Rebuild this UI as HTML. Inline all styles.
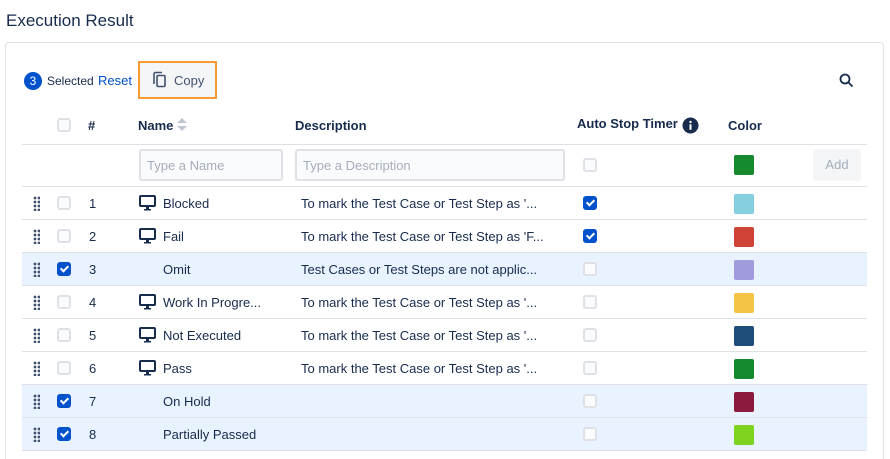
<!DOCTYPE html>
<html style="height:459px;overflow:hidden"><head><style>
*{box-sizing:border-box;margin:0;padding:0}
body{width:890px;height:459px;background:#fff;font-family:"Liberation Sans",sans-serif;color:#172b4d;position:relative;overflow:hidden;font-size:13px}
.a{position:absolute}
.panel{left:5px;top:42px;width:879px;height:417px;border:1px solid #dfe1e6;border-bottom:none;border-radius:4px 4px 0 0}
.cb{position:absolute;width:14px;height:14px;border:2px solid #dfe1e6;border-radius:3px;background:#fafbfc}
.cb.on{background:#0052cc;border-color:#0052cc}
.cb.on::after{content:"";position:absolute;left:3px;top:0px;width:3px;height:6px;border:solid #fff;border-width:0 2px 2px 0;transform:rotate(45deg)}
.row{position:absolute;left:22px;width:845px;height:33px;border-bottom:1px solid #dfe1e6}
.row.sel{background:#e9f2ff}
.row span{position:absolute;top:9px;font-size:13px}
.dots{position:absolute;left:11px;top:9px;width:7px;height:15px;background-image:radial-gradient(circle,#42526e 1.3px,transparent 1.5px);background-size:4px 4px}
.sw{position:absolute;left:712px;top:7px;width:20px;height:20px;border-radius:2px}
.mon{position:absolute;left:117px;top:8px}
</style></head><body>
<div class="a" style="left:6px;top:11px;font-size:17px;color:#172b4d">Execution Result</div>
<div class="a panel"></div>
<div class="a" style="left:24px;top:72px;width:18px;height:18px;border-radius:50%;background:#0052cc;color:#fff;font-size:12px;text-align:center;line-height:18px">3</div>
<div class="a" style="left:47px;top:74px;font-size:12px">Selected</div>
<div class="a" style="left:98px;top:73px;font-size:13px;color:#0052cc">Reset</div>
<div class="a" style="left:138px;top:61px;width:79px;height:38px;border:2px solid #f79a32;background:#f4f5f7"></div>
<svg class="a" style="left:151px;top:71px" width="16" height="18" viewBox="0 0 16 18"><path d="M3 13V3a1.5 1.5 0 0 1 1.5-1.5H11" fill="none" stroke="#42526e" stroke-width="1.6"/><rect x="6" y="4.5" width="8" height="11" rx="1.2" fill="none" stroke="#42526e" stroke-width="1.6"/></svg>
<div class="a" style="left:174px;top:73px;font-size:13px;color:#42526e">Copy</div>
<svg class="a" style="left:839px;top:73px" width="15" height="15" viewBox="0 0 15 15"><circle cx="6" cy="6" r="4.5" fill="none" stroke="#172b4d" stroke-width="1.8"/><path d="M9.5 9.5L13.5 13.5" stroke="#172b4d" stroke-width="1.8"/></svg>
<div class="cb" style="left:57px;top:118px"></div>
<div class="a" style="left:88px;top:118px;font-weight:bold;font-size:13px">#</div>
<div class="a" style="left:138px;top:118px;font-weight:bold;font-size:13px">Name</div>
<svg class="a" style="left:176px;top:117px" width="12" height="15"><path d="M1 6L6 1L11 6Z M1 9L6 14L11 9Z" fill="#c1c7d0"/></svg>
<div class="a" style="left:295px;top:118px;font-weight:bold;font-size:13px">Description</div>
<div class="a" style="left:577px;top:116px;font-weight:bold;font-size:13px">Auto Stop Timer</div>
<svg class="a" style="left:682px;top:117px" width="17" height="17"><circle cx="8.5" cy="8.5" r="8" fill="#172b4d"/><rect x="7.5" y="7.3" width="2" height="5.5" fill="#fff"/><circle cx="8.5" cy="5" r="1.2" fill="#fff"/></svg>
<div class="a" style="left:728px;top:118px;font-weight:bold;font-size:13px">Color</div>
<div class="a" style="left:22px;top:144px;width:845px;height:1px;background:#dfe1e6"></div>
<div class="a" style="left:139px;top:149px;width:144px;height:32px;border:2px solid #dfe1e6;border-radius:3px;background:#fafbfc;color:#a5adba;padding:7px 6px;font-size:13px">Type a Name</div>
<div class="a" style="left:295px;top:149px;width:270px;height:32px;border:2px solid #dfe1e6;border-radius:3px;background:#fafbfc;color:#a5adba;padding:7px 6px;font-size:13px">Type a Description</div>
<div class="cb" style="left:583px;top:158px"></div>
<div class="a" style="left:734px;top:155px;width:20px;height:20px;background:#168a2e;border-radius:2px"></div>
<div class="a" style="left:813px;top:149px;width:48px;height:32px;background:#f4f5f7;border-radius:3px;color:#a5adba;text-align:center;line-height:32px;font-size:13px">Add</div>
<div class="a" style="left:22px;top:186px;width:845px;height:1px;background:#dfe1e6"></div>

<div class="row" style="top:187px"><div class="dots"></div><div class="cb" style="left:35px;top:9px"></div><span style="left:67px">1</span><svg class="mon" width="17" height="16"><rect x="1" y="1" width="15" height="10" rx="1" fill="none" stroke="#172b4d" stroke-width="2"/><rect x="7" y="11" width="3" height="3" fill="#172b4d"/><rect x="5" y="14" width="7" height="1.5" fill="#172b4d"/></svg><span style="left:141px">Blocked</span><span style="left:279px">To mark the Test Case or Test Step as '...</span><div class="cb on" style="left:561px;top:9px"></div><div class="sw" style="background:#85d0e0"></div></div>
<div class="row" style="top:220px"><div class="dots"></div><div class="cb" style="left:35px;top:9px"></div><span style="left:67px">2</span><svg class="mon" width="17" height="16"><rect x="1" y="1" width="15" height="10" rx="1" fill="none" stroke="#172b4d" stroke-width="2"/><rect x="7" y="11" width="3" height="3" fill="#172b4d"/><rect x="5" y="14" width="7" height="1.5" fill="#172b4d"/></svg><span style="left:141px">Fail</span><span style="left:279px">To mark the Test Case or Test Step as 'F...</span><div class="cb on" style="left:561px;top:9px"></div><div class="sw" style="background:#d04437"></div></div>
<div class="row sel" style="top:253px"><div class="dots"></div><div class="cb on" style="left:35px;top:9px"></div><span style="left:67px">3</span><span style="left:141px">Omit</span><span style="left:279px">Test Cases or Test Steps are not applic...</span><div class="cb" style="left:561px;top:9px"></div><div class="sw" style="background:#a09bdb"></div></div>
<div class="row" style="top:286px"><div class="dots"></div><div class="cb" style="left:35px;top:9px"></div><span style="left:67px">4</span><svg class="mon" width="17" height="16"><rect x="1" y="1" width="15" height="10" rx="1" fill="none" stroke="#172b4d" stroke-width="2"/><rect x="7" y="11" width="3" height="3" fill="#172b4d"/><rect x="5" y="14" width="7" height="1.5" fill="#172b4d"/></svg><span style="left:141px">Work In Progre...</span><span style="left:279px">To mark the Test Case or Test Step as '...</span><div class="cb" style="left:561px;top:9px"></div><div class="sw" style="background:#f5c343"></div></div>
<div class="row" style="top:319px"><div class="dots"></div><div class="cb" style="left:35px;top:9px"></div><span style="left:67px">5</span><svg class="mon" width="17" height="16"><rect x="1" y="1" width="15" height="10" rx="1" fill="none" stroke="#172b4d" stroke-width="2"/><rect x="7" y="11" width="3" height="3" fill="#172b4d"/><rect x="5" y="14" width="7" height="1.5" fill="#172b4d"/></svg><span style="left:141px">Not Executed</span><span style="left:279px">To mark the Test Case or Test Step as '...</span><div class="cb" style="left:561px;top:9px"></div><div class="sw" style="background:#1f4e7a"></div></div>
<div class="row" style="top:352px"><div class="dots"></div><div class="cb" style="left:35px;top:9px"></div><span style="left:67px">6</span><svg class="mon" width="17" height="16"><rect x="1" y="1" width="15" height="10" rx="1" fill="none" stroke="#172b4d" stroke-width="2"/><rect x="7" y="11" width="3" height="3" fill="#172b4d"/><rect x="5" y="14" width="7" height="1.5" fill="#172b4d"/></svg><span style="left:141px">Pass</span><span style="left:279px">To mark the Test Case or Test Step as '...</span><div class="cb" style="left:561px;top:9px"></div><div class="sw" style="background:#168a2e"></div></div>
<div class="row sel" style="top:385px"><div class="dots"></div><div class="cb on" style="left:35px;top:9px"></div><span style="left:67px">7</span><span style="left:141px">On Hold</span><div class="cb" style="left:561px;top:9px"></div><div class="sw" style="background:#8b1a3f"></div></div>
<div class="row sel" style="top:418px"><div class="dots"></div><div class="cb on" style="left:35px;top:9px"></div><span style="left:67px">8</span><span style="left:141px">Partially Passed</span><div class="cb" style="left:561px;top:9px"></div><div class="sw" style="background:#7ed321"></div></div>
</body></html>
